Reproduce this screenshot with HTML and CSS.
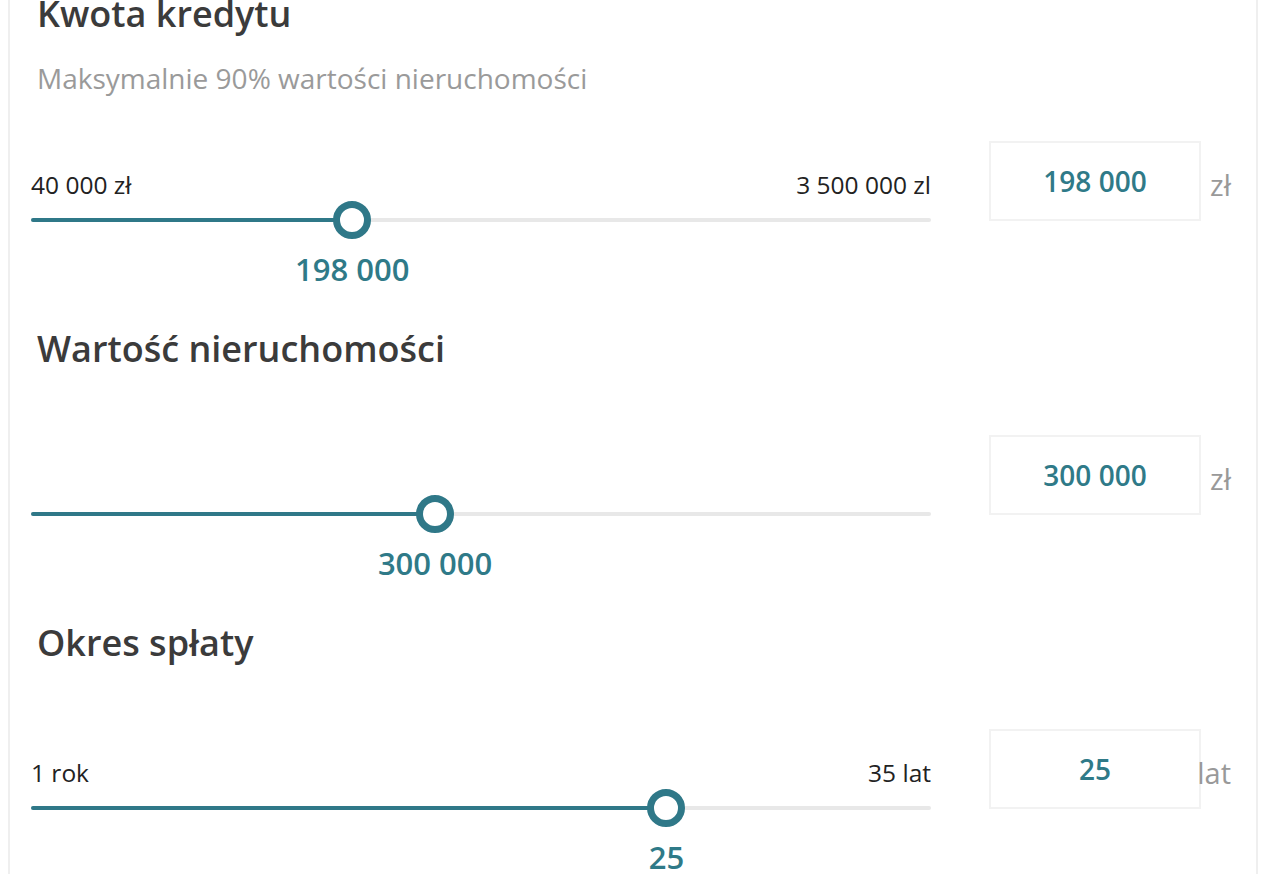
FILE: index.html
```html
<!DOCTYPE html>
<html lang="pl">
<head>
    <meta charset="UTF-8">
    <meta name="viewport" content="width=device-width, initial-scale=1.0">
    <title>Kalkulator kredytu</title>
    <link rel="stylesheet" href="styles.css">
</head>
<body>
    <div class="card">
        <section class="field">
            <h2>Kwota kredytu</h2>
            <p class="hint">Maksymalnie 90% wartości nieruchomości</p>
            <div class="field-row">
                <div class="slider">
                    <div class="limits"><span>40 000 zł</span><span>3 500 000 zl</span></div>
                    <div class="track">
                        <div class="fill" style="width:35.7%"></div>
                        <span class="thumb" style="left:35.7%"></span>
                    </div>
                    <div class="value-line"><span class="value" style="left:35.7%">198 000</span></div>
                </div>
                <input class="amount" type="text" value="198 000">
                <span class="unit">zł</span>
            </div>
        </section>

        <section class="field">
            <h2>Wartość nieruchomości</h2>
            <div class="field-row">
                <div class="slider">
                    <div class="limits"><span></span><span></span></div>
                    <div class="track">
                        <div class="fill" style="width:44.9%"></div>
                        <span class="thumb" style="left:44.9%"></span>
                    </div>
                    <div class="value-line"><span class="value" style="left:44.9%">300 000</span></div>
                </div>
                <input class="amount" type="text" value="300 000">
                <span class="unit">zł</span>
            </div>
        </section>

        <section class="field">
            <h2>Okres spłaty</h2>
            <div class="field-row">
                <div class="slider">
                    <div class="limits"><span>1 rok</span><span>35 lat</span></div>
                    <div class="track">
                        <div class="fill" style="width:70.6%"></div>
                        <span class="thumb" style="left:70.6%"></span>
                    </div>
                    <div class="value-line"><span class="value" style="left:70.6%">25</span></div>
                </div>
                <input class="amount" type="text" value="25">
                <span class="unit">lat</span>
            </div>
        </section>
    </div>
</body>
</html>
```

FILE: styles.css
```css
*{
    margin: 0;
    padding: 0;
    box-sizing: border-box;
}
body{
    margin: 0 8px;
    font-family: "Open Sans", "Liberation Sans", sans-serif;
    background: #fff;
    overflow: hidden;
}
.card{
    margin-top: -8px;
    border: 2px solid #efefef;
    border-top: none;
    padding: 0 20px 40px 21px;
    min-height: 900px;
}
.field{
    margin-bottom: 40px;
}
h2{
    font-size: 36px;
    line-height: 44px;
    font-weight: 600;
    color: #3b3b3b;
    padding-left: 6px;
    padding-bottom: 20px;
}
.hint{
    font-size: 28px;
    line-height: 38px;
    color: #9a9a9a;
    padding-left: 6px;
    padding-top: 3px;
}
.field-row{
    display: grid;
    grid-template-columns: 900px 212px 30px;
    column-gap: 58px;
    margin-top: 44px;
    align-items: start;
}
.field-row .unit{
    margin-left: -58px;
}
.slider{
    padding-top: 28px;
}
.limits{
    display: flex;
    justify-content: space-between;
    font-size: 24.5px;
    line-height: 31px;
    height: 31px;
    color: #222;
}
.track{
    position: relative;
    height: 40px;
}
.track::before{
    content: "";
    position: absolute;
    left: 0;
    right: 0;
    top: 18px;
    height: 4px;
    border-radius: 2px;
    background: #e8e8e8;
}
.fill{
    position: absolute;
    left: 0;
    top: 18px;
    height: 4px;
    border-radius: 2px;
    background: #2f7888;
}
.thumb{
    position: absolute;
    top: 1px;
    width: 38px;
    height: 38px;
    margin-left: -19px;
    border-radius: 50%;
    border: 7px solid #2f7888;
    background: #fff;
}
.value-line{
    position: relative;
    height: 36px;
    margin-top: 11px;
}
.value{
    position: absolute;
    top: 0;
    transform: translateX(-50%);
    font-size: 31px;
    line-height: 36px;
    font-weight: 600;
    color: #2f7a88;
    white-space: nowrap;
}
.amount{
    width: 212px;
    height: 80px;
    border: 2px solid #f2f2f2;
    font-family: inherit;
    font-size: 28px;
    font-weight: 600;
    color: #2f7a88;
    text-align: center;
    outline: none;
    background: #fff;
}
.unit{
    display: flex;
    justify-content: flex-end;
    width: 30px;
    padding-top: 28px;
    font-size: 29px;
    line-height: 32px;
    color: #999;
    white-space: nowrap;
}
```
